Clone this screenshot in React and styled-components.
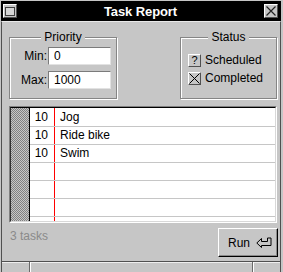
import React from 'react'
import styled, { createGlobalStyle } from 'styled-components'

const GlobalStyle = createGlobalStyle`
  html, body {
    margin: 0;
    padding: 0;
    background: #c6c6c6;
  }
  body {
    font-family: 'Liberation Sans', Arial, Helvetica, sans-serif;
    font-size: 12px;
    color: #000;
  }
`

const Frame = styled.div`
  width: 283px;
  height: 272px;
  box-sizing: border-box;
  padding: 1px 2px 0 1px;
  background: #c6c6c6;
  display: flex;
  flex-direction: column;
`

const TitleBar = styled.div`
  height: 20px;
  flex: none;
  background: #000;
  display: flex;
  align-items: center;
  padding: 0 3px 0 2px;
`

const WinButton = styled.div`
  width: 14px;
  height: 14px;
  box-sizing: border-box;
  background: #c6c6c6;
  border: 1px solid;
  border-color: #fff #505050 #505050 #fff;
  display: flex;
  align-items: center;
  justify-content: center;
`

const MenuGlyph = styled.div`
  width: 8px;
  height: 7px;
  border: 1px solid #404040;
  background: #d6d6d6;
`

const Title = styled.div`
  flex: 1;
  text-align: center;
  color: #fff;
  font-weight: bold;
  font-size: 13px;
  letter-spacing: -0.1px;
`

const Body = styled.div`
  flex: 1;
  min-height: 0;
  border-top: 1px solid #e8e8e8;
  border-left: 1px solid #505050;
  border-right: 1px solid #505050;
  padding: 15px 2px 0 7px;
  display: flex;
  flex-direction: column;
`

const TopRow = styled.div`
  display: flex;
  justify-content: space-between;
  align-items: flex-start;
`

const Group = styled.div`
  width: ${p => p.$width}px;
  box-sizing: border-box;
  margin-right: ${p => p.$right || 0}px;
  border: 1px solid #858585;
  box-shadow: 1px 1px 0 #fff, inset 1px 1px 0 #fff;
`

const Legend = styled.div`
  display: table;
  margin: -8px auto 0;
  padding: 0 3px;
  line-height: 14px;
  background: #c6c6c6;
`

const Fields = styled.div`
  display: grid;
  grid-template-columns: 37px 63px;
  column-gap: 1px;
  row-gap: 6px;
  align-items: center;
  padding: 3px 0 9px 0;
`

const FieldLabel = styled.label`
  text-align: right;
  line-height: 14px;
`

const NumberInput = styled.input`
  width: 63px;
  height: 18px;
  box-sizing: border-box;
  border: 1px solid;
  border-color: #7b7b7b #e2e2e2 #e2e2e2 #7b7b7b;
  background: #fff;
  padding: 0 0 0 5px;
  margin: 0;
  font-family: inherit;
  font-size: 12px;
  color: #000;
  outline: none;
`

const Options = styled.div`
  padding: 7px 0 11px 7px;
`

const OptionRow = styled.div`
  height: 18px;
  display: flex;
  align-items: center;
  gap: 4px;
`

const CheckBox = styled.div`
  width: 13px;
  height: 13px;
  box-sizing: border-box;
  border: 1px solid;
  border-color: #fff #505050 #505050 #fff;
  background: #c6c6c6;
  display: flex;
  align-items: center;
  justify-content: center;
  font-size: 11px;
  line-height: 1;
`

const ListFrame = styled.div`
  margin: 7px 1px 0 0;
  height: 117px;
  flex: none;
  box-sizing: border-box;
  border: 1px solid;
  border-color: #808080 #fff #fff #808080;
  display: flex;
`

const ListInner = styled.div`
  flex: 1;
  display: flex;
  overflow: hidden;
  border: 1px solid;
  border-color: #000 #d8d8d8 #d8d8d8 #303030;
`

const Gutter = styled.div`
  width: 18px;
  flex: none;
  border-right: 1px solid #000;
  background: repeating-conic-gradient(#808080 0 25%, #c6c6c6 0 50%) 0 0 / 2px 2px;
`

const Rows = styled.div`
  flex: 1;
  padding-top: 1px;
  background:
    linear-gradient(to right, transparent 24px, #ff0000 24px, #ff0000 25px, transparent 25px),
    #fff;
`

const Row = styled.div`
  display: grid;
  grid-template-columns: 24px 1fr;
  height: 18px;
  box-sizing: border-box;
  border-bottom: 1px solid #c6c6c6;
  line-height: 17px;
`

const NumCell = styled.div`
  text-align: right;
  padding-right: 6px;
`

const TextCell = styled.div`
  padding-left: 6px;
  white-space: nowrap;
`

const Footer = styled.div`
  margin-top: 5px;
  display: flex;
  justify-content: space-between;
  align-items: flex-start;
`

const TaskCount = styled.div`
  color: #8a8a8a;
  line-height: 14px;
  margin-top: 1px;
  padding-left: 1px;
`

const RunButton = styled.button`
  width: 60px;
  height: 29px;
  box-sizing: border-box;
  margin: 0;
  border: 1px solid;
  border-color: #fff #000 #000 #fff;
  box-shadow: inset -1px -1px 0 #8a8a8a;
  background: #c6c6c6;
  display: flex;
  align-items: center;
  gap: 6px;
  padding: 0 0 0 9px;
  font-family: inherit;
  font-size: 12px;
  color: #000;
`

const StatusStrip = styled.div`
  height: 11px;
  flex: none;
  box-sizing: border-box;
  border-top: 1px solid #505050;
  border-left: 1px solid #505050;
  border-right: 1px solid #505050;
  box-shadow: inset 0 1px 0 #eeeeee;
  display: grid;
  grid-template-columns: 28px 1fr 27px;
`

const StripCell = styled.div`
  border-right: ${p => (p.$last ? 'none' : '1px solid #6a6a6a')};
  border-left: ${p => (p.$first ? 'none' : '1px solid #fff')};
`

const tasks = [
  { priority: 10, name: 'Jog' },
  { priority: 10, name: 'Ride bike' },
  { priority: 10, name: 'Swim' },
  null,
  null,
  null,
  null,
]

function CloseIcon() {
  return (
    <svg width="10" height="10" viewBox="0 0 10 10">
      <path d="M0.5 0.5 L9.5 9.5 M9.5 0.5 L0.5 9.5" stroke="#222" strokeWidth="1.2" fill="none" />
    </svg>
  )
}

function CrossMark() {
  return (
    <svg width="11" height="11" viewBox="0 0 11 11">
      <path d="M0.5 0.5 L10.5 10.5 M10.5 0.5 L0.5 10.5" stroke="#000" strokeWidth="1" fill="none" />
    </svg>
  )
}

function ReturnIcon() {
  return (
    <svg width="16" height="11" viewBox="0 0 16 11">
      <path
        d="M0.8 6 L5.5 1.5 L5.5 4.5 L11.5 4.5 L11.5 1 L15 1 L15 8.5 L5.5 8.5 L5.5 10.5 Z"
        stroke="#000"
        strokeWidth="1"
        fill="none"
        strokeLinejoin="miter"
      />
    </svg>
  )
}

export default function App() {
  return (
    <>
      <GlobalStyle />
      <Frame>
        <TitleBar>
          <WinButton><MenuGlyph /></WinButton>
          <Title>Task Report</Title>
          <WinButton><CloseIcon /></WinButton>
        </TitleBar>
        <Body>
          <TopRow>
            <Group $width={108}>
              <Legend>Priority</Legend>
              <Fields>
                <FieldLabel>Min:</FieldLabel>
                <NumberInput defaultValue="0" />
                <FieldLabel>Max:</FieldLabel>
                <NumberInput defaultValue="1000" />
              </Fields>
            </Group>
            <Group $width={97} $right={1}>
              <Legend>Status</Legend>
              <Options>
                <OptionRow>
                  <CheckBox>?</CheckBox>
                  <span>Scheduled</span>
                </OptionRow>
                <OptionRow>
                  <CheckBox><CrossMark /></CheckBox>
                  <span>Completed</span>
                </OptionRow>
              </Options>
            </Group>
          </TopRow>
          <ListFrame>
            <ListInner>
              <Gutter />
              <Rows>
                {tasks.map((t, i) => (
                  <Row key={i}>
                    <NumCell>{t ? t.priority : ''}</NumCell>
                    <TextCell>{t ? t.name : ''}</TextCell>
                  </Row>
                ))}
              </Rows>
            </ListInner>
          </ListFrame>
          <Footer>
            <TaskCount>3 tasks</TaskCount>
            <RunButton>
              <span>Run</span>
              <ReturnIcon />
            </RunButton>
          </Footer>
        </Body>
        <StatusStrip>
          <StripCell $first />
          <StripCell />
          <StripCell $last />
        </StatusStrip>
      </Frame>
    </>
  )
}
